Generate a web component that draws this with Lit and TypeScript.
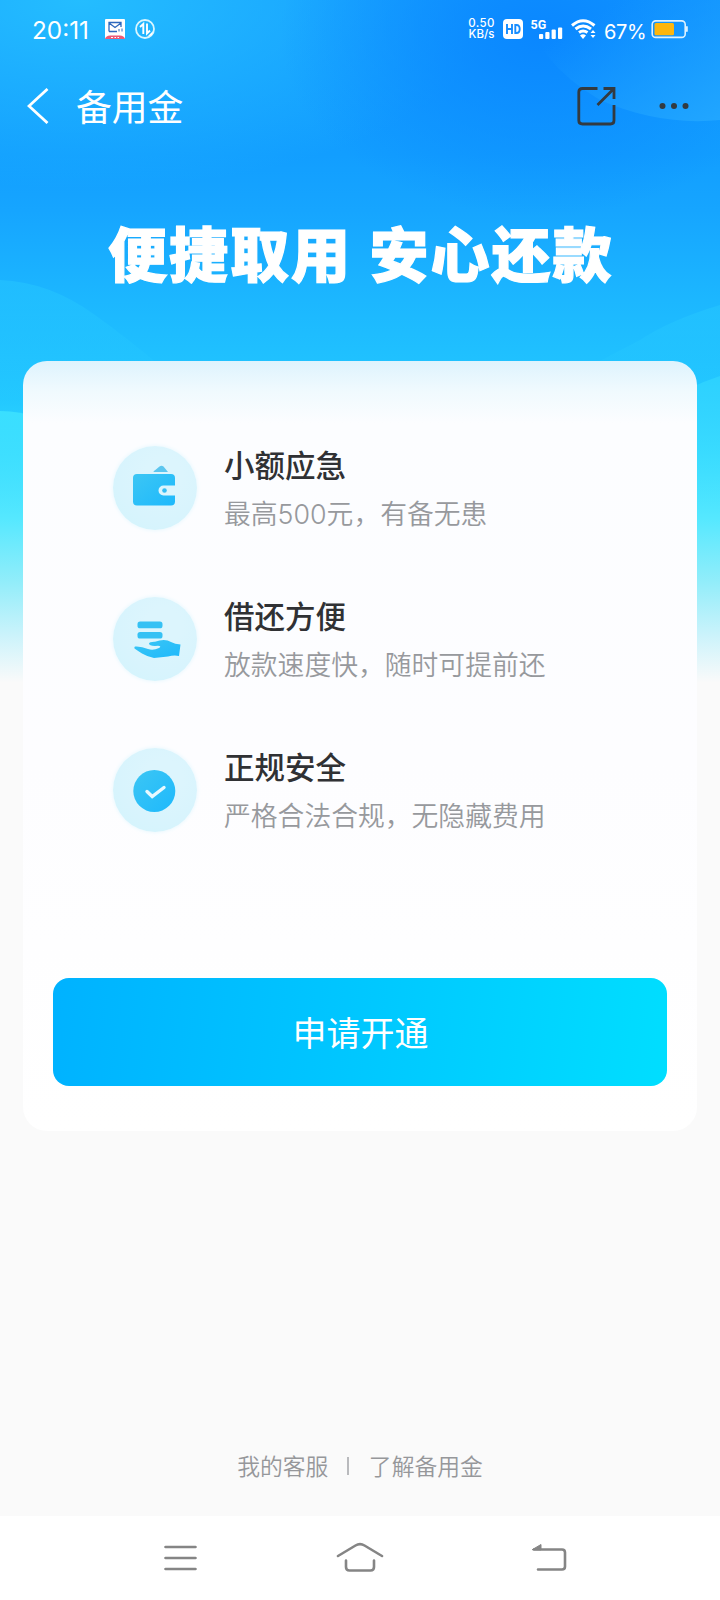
import { LitElement, html, css, svg } from "lit";
import { customElement } from "lit/decorators.js";

const walletIcon = svg`
  <path d="M20.500 18.500Q20.500 17.500 22 16.800L26.500 13Q28.500 11.700 30.500 13L35 18.500Z" fill="#5cc6ef"/>
  <path fill-rule="evenodd" fill="url(#g)" d="M4 20.500H38Q42 20.500 42 24.500V32H30.500A5 5 0 0 0 30.500 42H42V48Q42 52 38 52H4Q0 52 0 48V24.500Q0 20.500 4 20.500Z"/>
  <circle cx="31.500" cy="37" r="2.300" fill="#35bdf3"/>`;
const handIcon = svg`
  <rect x="4.500" y="17" width="25" height="6.800" rx="2.600" fill="#35c1f4"/>
  <rect x="4.500" y="27.500" width="25" height="6.500" rx="2.600" fill="#35c1f4"/>
  <path fill="url(#g)" d="M2 42Q8 41.500 15 44.500Q20 46.500 26 43.500Q29 41.700 25 41.300Q16 42 16 39Q16.500 37 22 37.200Q32 33.500 38 37.500Q42 39.500 47.500 40L46 51.500Q41 50.500 35 52L21 53.500Q14 52 9 49Q5 46.500 1.500 44Q1 42.500 2 42Z"/>`;
const checkIcon = svg`
  <circle cx="21.300" cy="35.500" r="21" fill="url(#g)"/>
  <path d="M14 36 19.200 41 31 32" fill="none" stroke="#e8f9ff" stroke-width="3.400" stroke-linecap="round"/>`;

const features = [
  { icon: walletIcon, title: "小额应急", text: "最高500元，有备无患" },
  { icon: handIcon, title: "借还方便", text: "放款速度快，随时可提前还" },
  { icon: checkIcon, title: "正规安全", text: "严格合法合规，无隐藏费用" },
];

@customElement("app-root")
export class AppRoot extends LitElement {
  static styles = css`
    :host {
      display: block;
      font-family: "Noto Sans CJK SC", sans-serif;
    }
    svg { display: block; flex: none; }
    .page {
      position: relative;
      isolation: isolate;
      width: 720px;
      height: 1600px;
      display: flex;
      flex-direction: column;
      background: #fafafa;
      overflow: hidden;
    }
    .backdrop { position: absolute; inset: 0 0 auto 0; z-index: -1; }
    .status {
      height: 58px;
      display: flex;
      align-items: center;
      padding: 0 32px;
      color: #fff;
    }
    .time { font: 400 24.300px/30px Inter, sans-serif; width: 73px; padding-top: 1px; white-space: nowrap; }
    .spacer { flex: 1; }
    .speed {
      font: 500 11.500px/11.500px Inter, sans-serif;
      text-align: center;
      width: 27px;
      margin-right: 8px;
    }
    .speed span { display: block; white-space: nowrap; }
    .speed span:first-child { letter-spacing: 0.400px; }
    .pct { font: 400 20px/24px Inter, sans-serif; letter-spacing: -0.300px; padding-top: 5px; width: 46px; margin-left: 5px; }
    .nav {
      height: 96px;
      display: flex;
      align-items: center;
      color: #fff;
      padding: 0 31px 0 27px;
    }
    .nav h1 { margin: -3px 0 0 27px; font-size: 35.800px; line-height: 48px; font-weight: 400; }
    .share { margin-right: 43px; }
    .hero {
      margin: 65px 0 0 108px;
      font-size: 59px;
      line-height: 66px;
      font-weight: 900;
      letter-spacing: 2px;
      word-spacing: 2px;
      color: #fff;
      white-space: nowrap;
      -webkit-text-stroke: 1.200px #fff;
    }
    .card {
      margin: 76px 23px 0;
      height: 770px;
      box-sizing: border-box;
      border-radius: 24px;
      padding: 84px 30px 0;
      background: linear-gradient(#def3fd 0, #f0fafe 30px, #fcfdff 62px, #fdfdff 400px, #fff 100%);
      display: flex;
      flex-direction: column;
    }
    .list { display: flex; flex-direction: column; gap: 67px; padding-left: 60px; }
    .item { display: flex; height: 84px; gap: 27px; }
    .disc {
      width: 84px;
      height: 84px;
      margin-top: 1px;
      border-radius: 50%;
      background: radial-gradient(circle at 60% 35%, #dcf5fd 25%, #d8f4fd 60%, #d2f4fc);
      box-shadow: 0 0 4px #e3f7fd;
    }
    .copy { white-space: nowrap; }
    .copy h2 { margin: -2px 0 0; font-size: 30.500px; line-height: 42px; font-weight: 500; color: #303134; }
    .copy p {
      margin: 9px 0 0;
      font-family: Inter, "Noto Sans CJK SC", sans-serif;
      font-size: 26.800px;
      line-height: 40px;
      font-weight: 350;
      color: #97999d;
    }
    .apply {
      margin-top: 147px;
      width: 614px;
      height: 108px;
      border: 0;
      border-radius: 16px;
      padding: 0 0 0 1px;
      background: linear-gradient(97deg, #00b2ff, #00c5ff 45%, #00deff);
      color: #fff;
      font: 400 34px/48px "Noto Sans CJK SC", sans-serif;
    }
    .links {
      margin-top: 319px;
      height: 32px;
      display: flex;
      align-items: center;
      justify-content: center;
      font-size: 22.800px;
      line-height: 32px;
      font-weight: 350;
      color: #96979a;
      white-space: nowrap;
    }
    .bar { width: 1.500px; height: 18px; background: #b9babd; margin: 0 20px 0 19px; }
    .system {
      margin-top: auto;
      height: 84px;
      background: #fff;
      display: flex;
      align-items: center;
      padding-left: 163px;
    }
    .home { margin-left: 138px; }
    .back { margin-left: 147px; }
  `;

  render() {
    return html`
      <div class="page">
        <svg class="backdrop" width="720" height="700" viewBox="0 0 720 700">
          <defs>
            <linearGradient id="sky" x1="0" y1="0" x2="0" y2="1">
              <stop offset="0" stop-color="#149aff"/><stop offset=".22" stop-color="#129eff"/>
              <stop offset=".3" stop-color="#16a5ff"/><stop offset=".43" stop-color="#1cb7ff"/>
              <stop offset=".57" stop-color="#22c8ff"/><stop offset=".64" stop-color="#30d8ff"/>
              <stop offset=".74" stop-color="#55e8ff"/><stop offset=".83" stop-color="#91edfa"/>
              <stop offset=".91" stop-color="#cdf3fb"/><stop offset=".975" stop-color="#fafafa"/>
            </linearGradient>
            <radialGradient id="tl" gradientUnits="userSpaceOnUse" cx="80" cy="0" r="420" gradientTransform="scale(1 .45)">
              <stop offset="0" stop-color="#24bdff"/><stop offset="1" stop-color="#24bdff" stop-opacity="0"/>
            </radialGradient>
            <radialGradient id="tr" gradientUnits="userSpaceOnUse" cx="540" cy="50" r="260" gradientTransform="scale(1 .7)">
              <stop offset="0" stop-color="#0a87ff"/><stop offset="1" stop-color="#0a87ff" stop-opacity="0"/>
            </radialGradient>
            <linearGradient id="cloud" x1="0" y1="0" x2="0" y2="1">
              <stop offset="0" stop-color="#28caff" stop-opacity=".45"/><stop offset="1" stop-color="#28caff" stop-opacity="0"/>
            </linearGradient>
            <linearGradient id="low" x1="0" y1="0" x2="0" y2="1">
              <stop offset="0" stop-color="#3adfff"/><stop offset="1" stop-color="#55e8ff" stop-opacity="0"/>
            </linearGradient>
            <linearGradient id="low-right" x1="0" y1="0" x2="0" y2="1">
              <stop offset="0" stop-color="#2cd1ff"/><stop offset="1" stop-color="#55e8ff" stop-opacity="0"/>
            </linearGradient>
            <linearGradient id="orb" x1="0" y1="0" x2="1" y2="1">
              <stop offset=".25" stop-color="#1b9cff" stop-opacity="0"/><stop offset="1" stop-color="#21a6ff"/>
            </linearGradient>
          </defs>
          <rect width="720" height="700" fill="url(#sky)"/>
          <rect width="720" height="200" fill="url(#tl)"/>
          <rect width="720" height="260" fill="url(#tr)"/>
          <path d="M520 0Q535 62 600 100Q660 126 720 120V0Z" fill="url(#orb)"/>
          <path d="M0 280Q50 282 95 315Q130 340 165 370V430H0Z" fill="url(#cloud)"/>
          <path d="M720 305Q670 320 640 340L590 366V430H720Z" fill="url(#cloud)"/>
          <path d="M0 411Q20 411 40 418V520H0Z" fill="url(#low)"/>
          <path d="M720 376Q705 381 690 388V510H720Z" fill="url(#low-right)"/>
        </svg>

        <div class="status">
          <span class="time">20:11</span>
          <svg width="50" height="20" viewBox="0 0 50 20">
            <rect width="20" height="20" rx="1" fill="#fff"/>
            <path d="M4 12.500V3.500H16V8M4 12.500H12M4 4 10 8.500 16 4" fill="none" stroke="#2e68bd" stroke-width="1.300"/>
            <path d="M14 10V12.500M17 9.500V12.500" stroke="#2e68bd"/>
            <path d="M0 20Q1 16.500 5 16.500H15Q19 16.500 20 20Z" fill="#ec5a77"/>
            <path d="M6 18.500H8M9.500 18.500H11M12.500 18.500H14" stroke="#fff"/>
            <circle cx="40" cy="10" r="9" fill="none" stroke="#d9f6ff" stroke-width="1.800"/>
            <path d="M35 8 38.300 5V15M42 4.500V14.500L45 11.500" fill="none" stroke="#fff" stroke-width="1.900"/>
            <path d="M42 18 48 12 47 16Z" fill="#fff"/>
          </svg>
          <span class="spacer"></span>
          <span class="speed"><span>0.50</span><span>KB/s</span></span>
          <svg width="96" height="24" viewBox="0 0 96 24" fill="#fff">
            <rect x="0" y="2" width="20" height="20" rx="4"/>
            <path d="M4 7V17M9 7V17M4 12H9M12.300 8V16H13.500Q16.700 16 16.700 12Q16.700 8 13.500 8Z" fill="none" stroke="#158cff" stroke-width="1.900"/>
            <text x="27.500" y="12" font-family="Roboto" font-weight="700" font-size="12.500">5G</text>
            <rect x="36" y="17" width="4.200" height="5" rx="1"/><rect x="42.300" y="15" width="4.200" height="7" rx="1"/>
            <rect x="48.600" y="12.500" width="4.200" height="9.500" rx="1"/><rect x="55" y="10.500" width="4.200" height="11.500" rx="1"/>
            <path d="M69 8.500Q80-1 91.500 8.500M72.500 12Q80 6 88 12M76 15.500Q80 12.500 84.500 15.500" fill="none" stroke="#fff" stroke-width="3"/>
            <path d="M77 18.500Q80 16 83 18.500L80 22Z"/>
            <path d="M87.500 16 90 13 92.500 16ZM87.500 18 90 21 92.500 18Z"/>
          </svg>
          <span class="pct">67%</span>
          <svg width="38" height="20" viewBox="0 0 38 20">
            <rect x="2.200" y="1.900" width="33" height="16.500" rx="3.500" fill="none" stroke="#dcf1ff" stroke-width="1.600"/>
            <rect x="4.500" y="4" width="19.500" height="12.300" rx="1.500" fill="#fdb60d"/>
            <rect x="36" y="7" width="1.800" height="6" rx=".9" fill="#dcf1ff"/>
          </svg>
        </div>

        <div class="nav">
          <svg width="22" height="36" viewBox="0 0 22 36" fill="none" stroke="#fff" stroke-width="2.800"><path d="M20.500 1 2 18 20.500 35"/></svg>
          <h1>备用金</h1>
          <span class="spacer"></span>
          <svg class="share" width="39" height="40" viewBox="0 0 39 40" fill="none" stroke="#333a40" stroke-width="2.800">
            <path d="M20.500 2.500H5.500Q1.800 2.500 1.800 6V34.500Q1.800 38 5.500 38H33.500Q37 38 37 34.500V19M26.500 2.500H37V13M37 2.500 20.500 19"/>
          </svg>
          <svg width="30" height="8" viewBox="0 0 30 8" fill="#333a40"><circle cx="3.500" cy="4" r="3"/><circle cx="15" cy="4" r="3"/><circle cx="26.500" cy="4" r="3"/></svg>
        </div>

        <div class="hero">便捷取用 安心还款</div>

        <div class="card">
          <div class="list">
            ${features.map((f) => html`
              <div class="item">
                <div class="disc">
                  <svg width="84" height="84" viewBox="-20 -7.500 84 84">
                    <defs><linearGradient id="g" x1="0" y1="0" x2="1" y2="1"><stop offset="0" stop-color="#3cc6f4"/><stop offset="1" stop-color="#1eb9fc"/></linearGradient></defs>
                    ${f.icon}
                  </svg>
                </div>
                <div class="copy"><h2>${f.title}</h2><p>${f.text}</p></div>
              </div>`)}
          </div>
          <button class="apply">申请开通</button>
        </div>

        <div class="links"><span>我的客服</span><span class="bar"></span><span>了解备用金</span></div>

        <div class="system">
          <svg width="35" height="28" viewBox="0 0 35 28" stroke="#858585" stroke-width="2.600" stroke-linecap="round"><path d="M2.500 3H32.500M2.500 14H32.500M2.500 25H32.500"/></svg>
          <svg class="home" width="48" height="32" viewBox="0 0 48 32" fill="none" stroke="#858585" stroke-width="2.600" stroke-linecap="round"><path d="M2 14 19.500 3.500Q24 .8 28.500 3.500L46 14M10 18.500V25Q10 28.500 13.500 28.500H34.500Q38 28.500 38 25V18.500"/></svg>
          <svg class="back" width="36" height="32" viewBox="0 0 36 32" fill="none" stroke="#858585" stroke-width="2.600" stroke-linecap="round"><path d="M3 7.500H31Q34 7.500 34 10.500V24.500Q34 27.500 31 27.500H7"/><path d="M1.500 7.500 10 2.500V7.500Z" fill="#858585" stroke-width="1"/></svg>
        </div>
      </div>
    `;
  }
}
